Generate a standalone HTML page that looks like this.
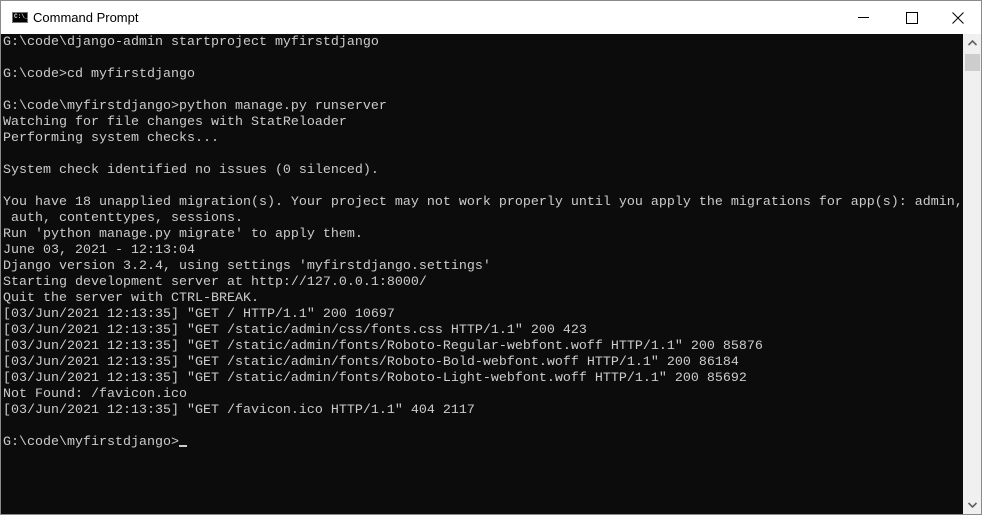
<!DOCTYPE html>
<html><head><meta charset="utf-8"><style>
html,body{margin:0;padding:0;width:982px;height:515px;overflow:hidden;background:#fff}
.win{position:absolute;left:0;top:0;width:980px;height:513px;border:1px solid #8a8a8a;background:#fff}
.title{position:absolute;left:0;top:0;width:980px;height:33px;background:#fff}
.ttext{position:absolute;left:32px;top:9px;font:13px "Liberation Sans",sans-serif;color:#000}
.icon{position:absolute;left:11px;top:11px;width:16px;height:11px;background:#000;border:1px solid #777;box-sizing:border-box}
.icon span{position:absolute;left:1px;top:1px;font:bold 6px "Liberation Mono",monospace;color:#ddd;line-height:6px}
.con{position:absolute;left:0;top:33px;width:962px;height:480px;background:#0c0c0c;overflow:hidden}
pre{margin:0;position:absolute;left:2px;top:1px;font-family:"Liberation Mono",monospace;font-size:13.33px;line-height:16px;color:#cccccc;white-space:pre}
.sb{position:absolute;left:962px;top:33px;width:18px;height:480px;background:#f0f0f0}
.thumb{position:absolute;left:2px;top:20px;width:15px;height:17px;background:#cdcdcd}
.cur{display:inline-block;width:8px;height:2px;background:#ccc;vertical-align:-2px}
</style></head><body>
<div class="win">
<div class="title">
<div class="icon"><span>C:\_</span></div>
<div class="ttext">Command Prompt</div>
<div style="position:absolute;left:857px;top:16px;width:11px;height:1px;background:#000"></div>
<div style="position:absolute;left:905px;top:11px;width:10px;height:10px;border:1px solid #000"></div>
<svg style="position:absolute;left:951px;top:11px" width="12" height="12"><path d="M0.5 0.5L11.5 11.5M11.5 0.5L0.5 11.5" stroke="#000" stroke-width="1"/></svg>
</div>
<div class="con"><pre>G:\code\django-admin startproject myfirstdjango

G:\code&gt;cd myfirstdjango

G:\code\myfirstdjango&gt;python manage.py runserver
Watching for file changes with StatReloader
Performing system checks...

System check identified no issues (0 silenced).

You have 18 unapplied migration(s). Your project may not work properly until you apply the migrations for app(s): admin,
 auth, contenttypes, sessions.
Run 'python manage.py migrate' to apply them.
June 03, 2021 - 12:13:04
Django version 3.2.4, using settings 'myfirstdjango.settings'
Starting development server at http://127.0.0.1:8000/
Quit the server with CTRL-BREAK.
[03/Jun/2021 12:13:35] "GET / HTTP/1.1" 200 10697
[03/Jun/2021 12:13:35] "GET /static/admin/css/fonts.css HTTP/1.1" 200 423
[03/Jun/2021 12:13:35] "GET /static/admin/fonts/Roboto-Regular-webfont.woff HTTP/1.1" 200 85876
[03/Jun/2021 12:13:35] "GET /static/admin/fonts/Roboto-Bold-webfont.woff HTTP/1.1" 200 86184
[03/Jun/2021 12:13:35] "GET /static/admin/fonts/Roboto-Light-webfont.woff HTTP/1.1" 200 85692
Not Found: /favicon.ico
[03/Jun/2021 12:13:35] "GET /favicon.ico HTTP/1.1" 404 2117

G:\code\myfirstdjango&gt;<span class="cur"></span></pre></div>
<div class="sb">
<svg style="position:absolute;left:5px;top:6px" width="9" height="6"><path d="M0.5 5L4.5 1L8.5 5" stroke="#606060" stroke-width="1.6" fill="none"/></svg>
<div class="thumb"></div>
<svg style="position:absolute;left:5px;top:468px" width="9" height="6"><path d="M0.5 1L4.5 5L8.5 1" stroke="#606060" stroke-width="1.6" fill="none"/></svg>
</div>
</div>
</body></html>
